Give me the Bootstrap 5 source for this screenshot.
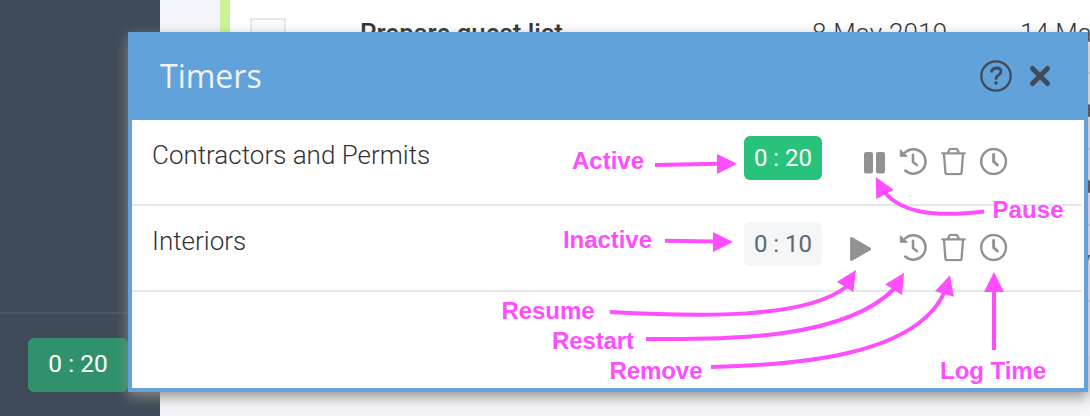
<!DOCTYPE html>
<html lang="en">
<head>
<meta charset="utf-8">
<title>Timers</title>
<link href="https://cdn.jsdelivr.net/npm/bootstrap@5.3.0/dist/css/bootstrap.min.css" rel="stylesheet">
<style>
body{font-family:Roboto,"Liberation Sans",sans-serif;background:#f4f5fa;color:#333}
.app{height:416px}
.side{width:160px;background:#3f4b59}
.side-foot{height:104px;border-top:2px solid #4b5664;padding:24px 0 0 28px}
.side-timer{width:100px;height:54px;background:#30926d;color:#fff;border-radius:6px;font-size:24.500px;padding-bottom:2px}
.board{padding-left:60px}
.task{border-left:10px solid #c9f495;background:#fff;height:356px}
.task-row{height:76px;border-bottom:2px solid #e3e3e3;font-size:26px;line-height:30px;white-space:nowrap}
.task-row:first-child{height:74px}
.task-row:first-child span{margin-top:-2px}
.check{left:20px;top:20px;width:36px;height:36px;border:2px solid #e8e8e8;background:#fbfbfd}
.task-name{left:130px;top:20px;font-weight:500;font-size:25.800px}
.d1{left:582px;top:20px;font-weight:300;letter-spacing:.2px}
.d2{left:790px;top:20px;font-weight:300}
.d3{left:848px;top:19px;font-weight:400}
.dlg{left:128px;top:32px;width:960px;height:360px;background:#fff;border:4px solid #62a2db;border-top:0;box-shadow:0 5px 12px rgba(142,136,132,.9)}
.dlg-head{height:88px;margin:0 -4px;background:#62a2db;padding:0 36px 0 32px}
.dlg-title{font:32px/1 "Open Sans",sans-serif;color:#f1f1f1}
.t-row{height:86px;border-bottom:2px solid #e4e8eb;margin-right:2px;padding:16px 73px 0 20px}
.t-name{font-size:26px;font-weight:300;line-height:38px;color:#333}
.pill{width:78px;height:44px;border-radius:6px;font-size:24px;padding-bottom:1px}
.on{background:#29c27c;color:#fff}
.off{background:#f4f6f8;color:#5d6776}
.acts{width:187px;height:50px;color:#929292}
.notes{left:0;top:0;pointer-events:none}
.notes text{font:bold 24px "Liberation Sans",sans-serif;fill:#ff4dff}
</style>
</head>
<body class="overflow-hidden">
<svg class="d-none">
  <symbol id="restart" viewBox="0 0 28 28"><path d="M6.200 4.900A12.200 12.200 0 1 1 6.200 23" fill="none" stroke="currentColor" stroke-width="2.500" stroke-linecap="round"/><path d="M1.300 2.300 8.300 8.800H1.300z" fill="currentColor" stroke="currentColor" stroke-linejoin="round"/><path d="M14 7.300v7.200l3.800 3.100" fill="none" stroke="currentColor" stroke-width="2.600" stroke-linecap="round"/></symbol>
  <symbol id="trash" viewBox="0 0 28 28"><path d="M3 5.800H25.400M8.800 5 10 2.300Q10.500 1.300 11.500 1.300H16.700Q17.700 1.300 18.200 2.300L19.400 5M4.700 6.500 6.100 24.800Q6.300 26.700 8.100 26.700H20.300Q22.100 26.700 22.300 24.800L23.700 6.500" fill="none" stroke="currentColor" stroke-width="2.300" stroke-linecap="round"/></symbol>
  <symbol id="clock" viewBox="0 0 28 28"><circle cx="14" cy="14" r="12.400" fill="none" stroke="currentColor" stroke-width="2.500"/><path d="M14 7v7.200l3.800 3.300" fill="none" stroke="currentColor" stroke-width="2.900" stroke-linecap="round"/></symbol>
</svg>
<div class="app d-flex position-relative overflow-hidden">
  <aside class="side d-flex flex-column justify-content-end flex-shrink-0">
    <div class="side-foot"><div class="side-timer d-flex align-items-center justify-content-center">0 : 20</div></div>
  </aside>
  <main class="board flex-grow-1">
    <div class="task">
      <div class="task-row position-relative">
        <span class="check position-absolute"></span>
        <span class="task-name position-absolute">Prepare guest list</span>
        <span class="d1 position-absolute">8 May 2019</span>
        <span class="d2 position-absolute">14 Ma</span>
      </div>
      <div class="task-row position-relative"><span class="d3 position-absolute">a</span></div>
      <div class="task-row position-relative"><span class="d3 position-absolute">a</span></div>
      <div class="task-row position-relative"><span class="d3 position-absolute">y</span></div>
    </div>
  </main>
  <section class="dlg position-absolute">
    <header class="dlg-head d-flex align-items-center justify-content-between">
      <div class="dlg-title">Timers</div>
      <div class="d-flex align-items-center">
        <svg width="76" height="36" viewBox="0 0 76 36" fill="none" stroke="#3f4b59"><circle cx="20" cy="18" r="14.700" stroke-width="2.300"/><path d="M15.500 13.300q1.500-3.300 5-3.300c2.700 0 4.500 1.400 4.500 3.700 0 3.500-5 3.300-5 6.800" stroke-width="2.800" stroke-linecap="round"/><circle cx="20" cy="25" r="1.800" fill="#3f4b59" stroke="none"/><path d="M56.500 10.500l15 15M71.500 10.500 56.500 25.500" stroke-width="5" stroke-linecap="round"/></svg>
      </div>
    </header>
    <div class="t-row d-flex">
      <div class="t-name flex-grow-1">Contractors and Permits</div>
      <div class="pill on d-flex align-items-center justify-content-center">0 : 20</div>
      <svg class="acts" viewBox="822 136 187 50"><g fill="currentColor"><rect x="864" y="152" width="9" height="21.500" rx="2"/><rect x="876" y="152" width="9" height="21.500" rx="2"/></g><use href="#restart" x="899" y="147.500" width="28" height="28"/><use href="#trash" x="939.300" y="147.500" width="28" height="28"/><use href="#clock" x="979.600" y="147.500" width="28" height="28"/></svg>
    </div>
    <div class="t-row d-flex">
      <div class="t-name flex-grow-1">Interiors</div>
      <div class="pill off d-flex align-items-center justify-content-center">0 : 10</div>
      <svg class="acts" viewBox="822 136 187 50"><path d="M851.500 152.500v21L869.700 163z" fill="currentColor" stroke="currentColor" stroke-width="2.800" stroke-linejoin="round"/><use href="#restart" x="899" y="147.500" width="28" height="28"/><use href="#trash" x="939.300" y="147.500" width="28" height="28"/><use href="#clock" x="979.600" y="147.500" width="28" height="28"/></svg>
    </div>
  </section>
  <svg class="notes position-absolute" width="1090" height="416">
    <g fill="none" stroke="#ff4dff" stroke-width="4">
      <path d="M655 165 718 163.700M665 240.700 714 241.500"/>
      <path d="M984 211.500C930 218 901 211 885 193"/>
      <path d="M610 312C700 317 805 319 846 287"/>
      <path d="M646 339C735 340 845 338 894 289"/>
      <path d="M711 367C800 365 915 355 944 293"/>
      <path d="M994 350V290"/>
    </g>
    <path fill="#ff4dff" d="M717 154 737 163.700 717 174zM713 232 733 242 713 252zM875.700 177 893.700 189.700 876.300 199zM856 270 837 281.700 853.300 292zM904 273 885.300 284.300 902 295zM950 275.300 935 291.300 954 296.700zM994 272 984 292h20z"/>
    <text x="572" y="169" textLength="72">Active</text>
    <text x="563" y="248" textLength="89">Inactive</text>
    <text x="992.500" y="218" textLength="71">Pause</text>
    <text x="501.500" y="319" textLength="93">Resume</text>
    <text x="552" y="349" textLength="82">Restart</text>
    <text x="609.500" y="379" textLength="93">Remove</text>
    <text x="940" y="379" textLength="106">Log Time</text>
  </svg>
</div>
<script src="https://cdn.jsdelivr.net/npm/bootstrap@5.3.0/dist/js/bootstrap.bundle.min.js"></script>
</body>
</html>
